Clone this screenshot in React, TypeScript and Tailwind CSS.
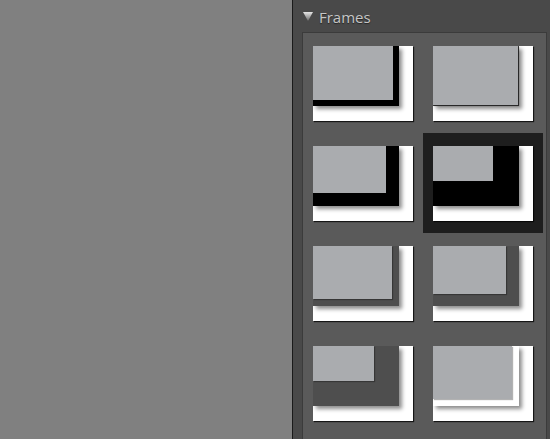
import React from 'react';

type Frame = {
  border: string;
  selected?: boolean;
};

const frames: Frame[] = [
  { border: 'border-r-[6px] border-b-[6px] border-black' },
  { border: 'border-r border-b border-[#3a3a3a]' },
  { border: 'border-r-[13px] border-b-[13px] border-black' },
  { border: 'border-r-[26px] border-b-[25px] border-black', selected: true },
  { border: 'border-r-[7px] border-b-[7px] border-[#4e4e4e]' },
  { border: 'border-r-[13px] border-b-[12px] border-[#4e4e4e]' },
  { border: 'border-r-[25px] border-b-[25px] border-[#4e4e4e]' },
  { border: 'border-r-[7px] border-b-[7px] border-white' },
];

const Thumb: React.FC<{ frame: Frame }> = ({ frame }) => (
  <div className={`w-[120px] h-[100px] pl-[10px] pt-[13px] ${frame.selected ? 'bg-[#1e1e1e]' : ''}`}>
    <div className="w-[100px] h-[75px] bg-white overflow-hidden shadow-[1px_1px_1px_rgba(0,0,0,0.75)]">
      <div className={`w-[86px] h-[60px] box-border ${frame.border} shadow-[3px_3px_4px_rgba(0,0,0,0.45)]`}>
        <div className="w-full h-full bg-[#aaacaf] shadow-[1px_1px_1px_rgba(0,0,0,0.3)]" />
      </div>
    </div>
  </div>
);

const App: React.FC = () => {
  return (
    <div className="flex w-[550px] h-[439px] overflow-hidden" style={{ fontFamily: '"Open Sans", "Liberation Sans", sans-serif' }}>
      <div className="w-[292px] h-full bg-[#808080]" />
      <div className="w-px h-full bg-[#1a1a1a]" />
      <div className="flex-1 h-full bg-[#494949] flex flex-col">
        <div className="h-[32px] flex items-center pl-[10px] gap-[6px] shrink-0">
          <svg width="10" height="10" viewBox="0 0 10 10">
            <defs>
              <linearGradient id="tri" x1="0" y1="0" x2="0" y2="1">
                <stop offset="0" stopColor="#e6e6e6" />
                <stop offset="1" stopColor="#6a6a6a" />
              </linearGradient>
            </defs>
            <polygon points="0,1 10,1 5,10" fill="url(#tri)" />
          </svg>
          <span className="text-[15px] text-[#c6c6c6] leading-none mt-[2px] [text-shadow:0_1px_1px_rgba(0,0,0,0.5)]">Frames</span>
        </div>
        <div className="flex-1 ml-[9px] mr-[3px] border border-b-0 border-[#3b3b3b] bg-[#5a5a5a]">
          <div className="grid grid-cols-[120px_120px]">
            {frames.map((f, i) => (
              <Thumb key={i} frame={f} />
            ))}
          </div>
        </div>
      </div>
    </div>
  );
};

export default App;
